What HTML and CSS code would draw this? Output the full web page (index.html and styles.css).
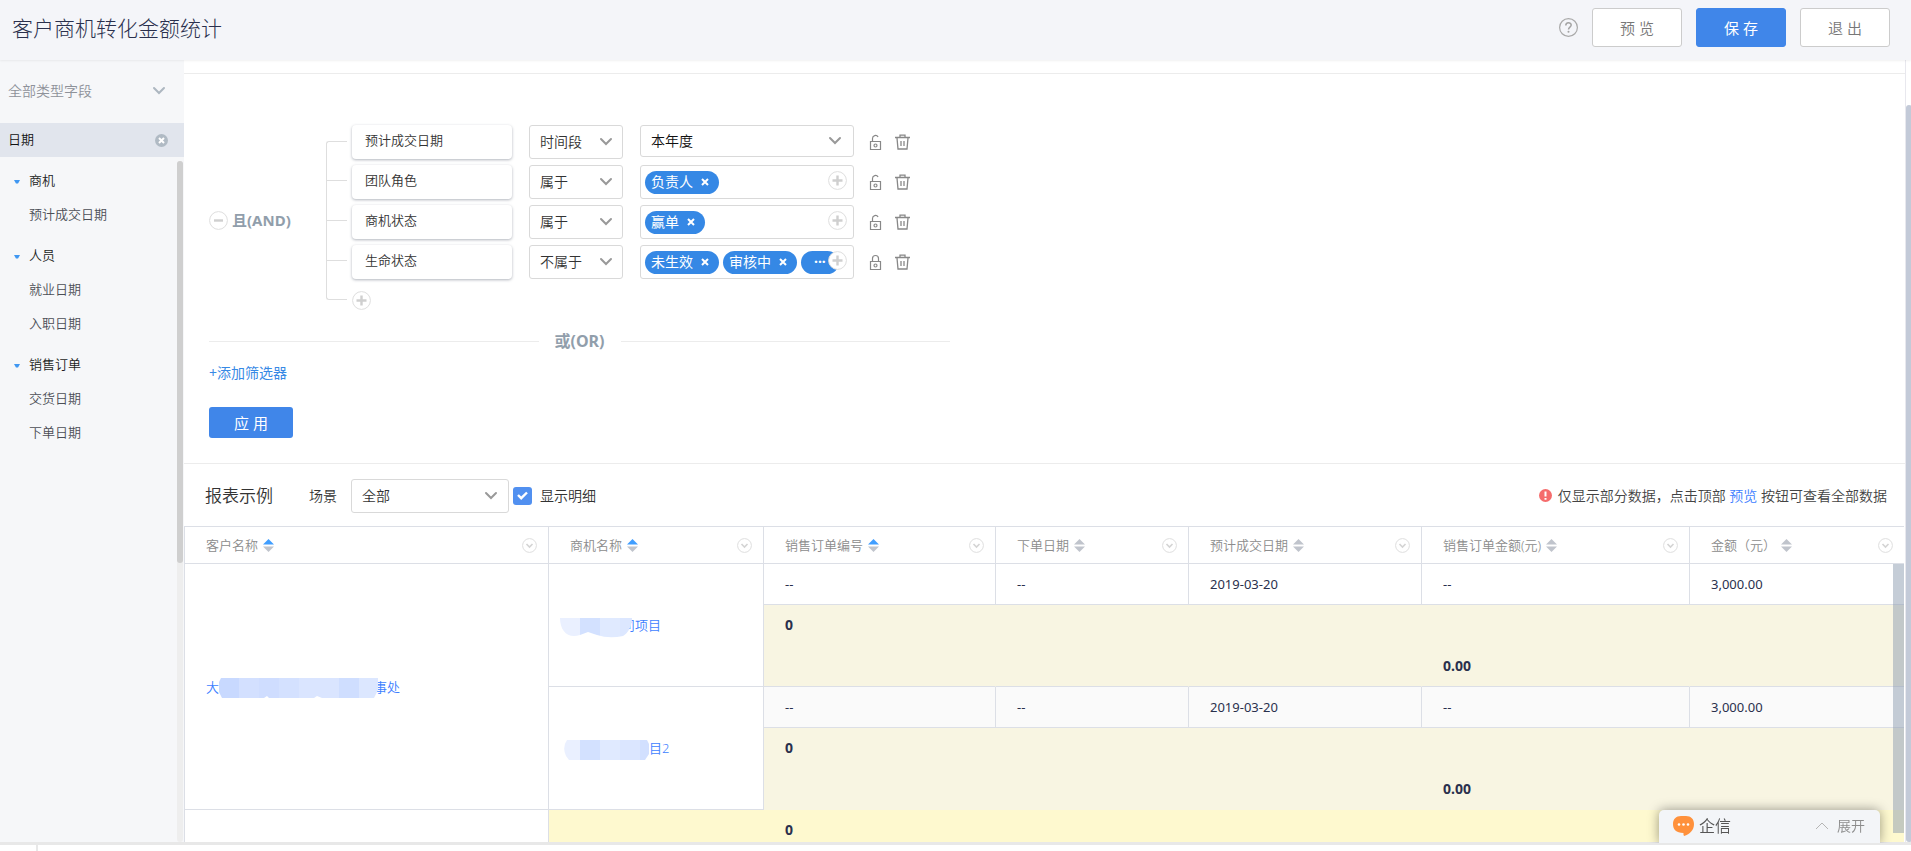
FILE: index.html
```html
<!DOCTYPE html>
<html lang="zh-CN">
<head>
<meta charset="utf-8">
<title>客户商机转化金额统计</title>
<link rel="stylesheet" href="styles.css">
</head>
<body>
<svg class="defs" aria-hidden="true">
  <symbol id="chevron" viewBox="0 0 14 10"><path d="M2 2l5 5 5-5" fill="none" stroke="currentColor" stroke-width="2" stroke-linecap="round"/></symbol>
  <symbol id="plus" viewBox="0 0 19 19"><circle cx="9.5" cy="9.5" r="8.9" fill="#fff" stroke="#dedede"/><path d="M9.5 4.5v10M4.5 9.5h10" stroke="#cfcfcf" stroke-width="2.4"/></symbol>
  <symbol id="unlock" viewBox="0 0 13 16"><path d="M1.5 7.5h10v8h-10zM3.5 7.500V4.500a3 3 0 0 1 5.600-1.500" fill="none" stroke="currentColor" stroke-width="1.200"/><circle cx="6.500" cy="11.500" r="1.500" fill="none" stroke="currentColor" stroke-width="1.200"/></symbol>
  <symbol id="lock" viewBox="0 0 13 16"><path d="M1.5 7.5h10v8h-10zM3.500 7.500V4.500a3 3 0 0 1 6 0v3" fill="none" stroke="currentColor" stroke-width="1.200"/><circle cx="6.500" cy="11.500" r="1.500" fill="none" stroke="currentColor" stroke-width="1.200"/></symbol>
  <symbol id="trash" viewBox="0 0 15 16"><path d="M0 3.500h15M5 3V1.200h5V3M2 4l1 11h9l1-11M6 7v5M9 7v5" fill="none" stroke="currentColor" stroke-width="1.300"/></symbol>
  <symbol id="sort" viewBox="0 0 11 13"><path d="M0 5.500L5.500 0 11 5.500z" class="sort-up"/><path d="M0 7.500L5.500 13 11 7.500z" fill="#c0c4cc"/></symbol>
  <symbol id="menu" viewBox="0 0 15 15"><circle cx="7.500" cy="7.500" r="6.900" fill="#fff" stroke="#dedede"/><path d="M4.500 6l3 3 3-3" fill="none" stroke="#d4d4d4" stroke-width="1.600"/></symbol>
  <symbol id="cross" viewBox="0 0 8 8"><path d="M1 1l6 6M7 1L1 7" stroke="currentColor" stroke-width="2"/></symbol>
  <symbol id="caret" viewBox="0 0 6 4"><path d="M0 0h6L4 3.500H2z" fill="#3f97f2"/></symbol>
</svg>

<header class="header">
  <h1 class="title">客户商机转化金额统计</h1>
  <svg class="help" viewBox="0 0 19 19"><circle cx="9.500" cy="9.500" r="8.900" fill="none" stroke="#a9a9a9" stroke-width="1.200"/><path d="M6.800 7.500c0-3.600 5.400-3.400 5.400-.4 0 2-2.700 2-2.700 4.300" fill="none" stroke="#a3a3a3" stroke-width="1.500"/><circle cx="9.500" cy="13.700" r="1" fill="#a3a3a3"/></svg>
  <button class="btn">预 览</button>
  <button class="btn btn-primary">保 存</button>
  <button class="btn">退 出</button>
</header>

<div class="body">
  <aside class="sidebar">
    <div class="type-select">
      <select aria-label="字段类型"><option>全部类型字段</option></select>
      <svg class="chevron"><use href="#chevron"/></svg>
    </div>
    <div class="search">
      <input type="text" value="日期" aria-label="搜索字段">
      <button class="clear" aria-label="清空"><svg viewBox="0 0 13 13"><circle cx="6.500" cy="6.500" r="6.500" fill="#b0bac4"/><path d="M4 4l5 5M9 4L4 9" stroke="#fff" stroke-width="2"/></svg></button>
    </div>
    <nav class="fields">
      <ul class="tree">
        <li class="group"><svg><use href="#caret"/></svg>商机</li><li>预计成交日期</li>
        <li class="group"><svg><use href="#caret"/></svg>人员</li><li>就业日期</li><li>入职日期</li>
        <li class="group"><svg><use href="#caret"/></svg>销售订单</li><li>交货日期</li><li>下单日期</li>
      </ul>
      <div class="side-track"><div class="side-thumb"></div></div>
    </nav>
  </aside>

  <main class="main">
    <div class="content">
      <section class="filters">
        <div class="rule-group">
          <div class="join"><svg viewBox="0 0 19 19"><circle cx="9.500" cy="9.500" r="8.900" fill="#fff" stroke="#dedede"/><path d="M5 9.500h9" stroke="#cfcfcf" stroke-width="2.400"/></svg>且(AND)</div>
          <div class="bracket"><i></i><i></i><i></i></div>
          <div class="rules">
            <div class="rule">
              <div class="field">预计成交日期</div>
              <div class="pick op"><select aria-label="条件"><option>时间段</option></select><svg class="chevron"><use href="#chevron"/></svg></div>
              <div class="pick value range"><select aria-label="取值"><option>本年度</option></select><svg class="chevron"><use href="#chevron"/></svg></div>
              <button class="icon" aria-label="解锁"><svg class="lock"><use href="#unlock"/></svg></button>
              <button class="icon" aria-label="删除"><svg class="trash"><use href="#trash"/></svg></button>
            </div>
            <div class="rule">
              <div class="field">团队角色</div>
              <div class="pick op"><select aria-label="条件"><option>属于</option></select><svg class="chevron"><use href="#chevron"/></svg></div>
              <div class="value chips"><span class="chip">负责人<button aria-label="移除"><svg><use href="#cross"/></svg></button></span><button class="add" aria-label="添加"><svg><use href="#plus"/></svg></button></div>
              <button class="icon" aria-label="解锁"><svg class="lock"><use href="#unlock"/></svg></button>
              <button class="icon" aria-label="删除"><svg class="trash"><use href="#trash"/></svg></button>
            </div>
            <div class="rule">
              <div class="field">商机状态</div>
              <div class="pick op"><select aria-label="条件"><option>属于</option></select><svg class="chevron"><use href="#chevron"/></svg></div>
              <div class="value chips"><span class="chip">赢单<button aria-label="移除"><svg><use href="#cross"/></svg></button></span><button class="add" aria-label="添加"><svg><use href="#plus"/></svg></button></div>
              <button class="icon" aria-label="解锁"><svg class="lock"><use href="#unlock"/></svg></button>
              <button class="icon" aria-label="删除"><svg class="trash"><use href="#trash"/></svg></button>
            </div>
            <div class="rule">
              <div class="field">生命状态</div>
              <div class="pick op"><select aria-label="条件"><option>不属于</option></select><svg class="chevron"><use href="#chevron"/></svg></div>
              <div class="value chips"><span class="chip">未生效<button aria-label="移除"><svg><use href="#cross"/></svg></button></span><span class="chip">审核中<button aria-label="移除"><svg><use href="#cross"/></svg></button></span><span class="chip more">···</span><button class="add" aria-label="添加"><svg><use href="#plus"/></svg></button></div>
              <button class="icon" aria-label="锁定"><svg class="lock"><use href="#lock"/></svg></button>
              <button class="icon" aria-label="删除"><svg class="trash"><use href="#trash"/></svg></button>
            </div>
            <button class="add-rule" aria-label="添加条件"><svg><use href="#plus"/></svg></button>
          </div>
        </div>
        <div class="or">或(OR)</div>
        <a class="add-filter" href="#">+添加筛选器</a>
        <button class="apply">应 用</button>
      </section>

      <section class="toolbar">
        <h2>报表示例</h2>
        <label class="scene" for="scene">场景</label>
        <div class="pick scene-pick"><select id="scene"><option>全部</option></select><svg class="chevron"><use href="#chevron"/></svg></div>
        <label class="detail"><input type="checkbox" checked><svg viewBox="0 0 19 19"><path d="M5 9l3.200 3.200L14 6.500" fill="none" stroke="#fff" stroke-width="2.400"/></svg><span>显示明细</span></label>
        <p class="notice"><svg viewBox="0 0 13 13"><circle cx="6.500" cy="6.500" r="6.500" fill="#f56c6c"/><path d="M6.500 2.500v5M6.500 9v1.800" stroke="#fff" stroke-width="2"/></svg><span>仅显示部分数据，点击顶部 <a href="#">预览</a> 按钮可查看全部数据</span></p>
      </section>

      <div class="report">
        <table class="grid">
          <colgroup><col class="c1"><col class="c2"><col class="c3"><col class="c4"><col class="c5"><col class="c6"><col class="c7"></colgroup>
          <thead>
            <tr>
              <th><div class="head sorted">客户名称<svg class="sort"><use href="#sort"/></svg><svg class="menu"><use href="#menu"/></svg></div></th>
              <th><div class="head sorted">商机名称<svg class="sort"><use href="#sort"/></svg><svg class="menu"><use href="#menu"/></svg></div></th>
              <th><div class="head sorted">销售订单编号<svg class="sort"><use href="#sort"/></svg><svg class="menu"><use href="#menu"/></svg></div></th>
              <th><div class="head">下单日期<svg class="sort"><use href="#sort"/></svg><svg class="menu"><use href="#menu"/></svg></div></th>
              <th><div class="head">预计成交日期<svg class="sort"><use href="#sort"/></svg><svg class="menu"><use href="#menu"/></svg></div></th>
              <th><div class="head">销售订单金额(元)<svg class="sort"><use href="#sort"/></svg><svg class="menu"><use href="#menu"/></svg></div></th>
              <th><div class="head">金额（元）<svg class="sort"><use href="#sort"/></svg><svg class="menu"><use href="#menu"/></svg></div></th>
            </tr>
          </thead>
          <tbody>
            <tr>
              <td rowspan="6"><a class="masked" href="#">大<svg class="mask mask-a" viewBox="0 0 160 20"><clipPath id="ma"><path d="M2 0h157v12l-4 8H103l-5-2-3 2H50l-2-2-3 2H3L0 14V4z"/></clipPath><g clip-path="url(#ma)"><path fill="#c8d9ff" d="M0 0h20v20H0z"/><path fill="#d3e0ff" d="M20 0h20v20H20z"/><path fill="#cfddff" d="M40 0h20v20H40z"/><path fill="#d4e1ff" d="M60 0h20v20H60z"/><path fill="#dae5ff" d="M80 0h40v20H80z"/><path fill="#cfdeff" d="M120 0h20v20h-20z"/><path fill="#dce7ff" d="M140 0h20v20h-20z"/></g></svg>事处</a></td>
              <td rowspan="3"><a class="masked" href="#"><svg class="mask mask-b" viewBox="0 0 72 20"><clipPath id="mb"><path d="M0 0h72c0 9-4 15-9 18q-14 3-26-1l-9-3-8 3C8 21 0 13 0 0z"/></clipPath><g clip-path="url(#mb)"><path fill="#eaf0ff" d="M0 0h20v20H0z"/><path fill="#d3e1ff" d="M20 0h20v20H20z"/><path fill="#e0eaff" d="M40 0h20v20H40z"/><path fill="#dce7ff" d="M60 0h12v20H60z"/></g></svg>司项目</a></td>
              <td>--</td><td>--</td><td>2019-03-20</td><td>--</td><td>3,000.00</td>
            </tr>
            <tr class="sub"><td>0</td><td></td><td></td><td></td><td></td></tr>
            <tr class="sub sub-end"><td></td><td></td><td></td><td>0.00</td><td></td></tr>
            <tr class="alt">
              <td rowspan="3"><a class="masked" href="#"><svg class="mask mask-c" viewBox="0 0 85 20"><clipPath id="mc"><path d="M3 0h80l2 4v10l-4 6H5l-3-4q-4-9 1-16z"/></clipPath><g clip-path="url(#mc)"><path fill="#eaf0ff" d="M0 0h16v20H0z"/><path fill="#d3e1ff" d="M16 0h20v20H16z"/><path fill="#e0eaff" d="M36 0h20v20H36z"/><path fill="#dbe6ff" d="M56 0h20v20H56z"/><path fill="#d2e0ff" d="M76 0h9v20h-9z"/></g></svg>目2</a></td>
              <td>--</td><td>--</td><td>2019-03-20</td><td>--</td><td>3,000.00</td>
            </tr>
            <tr class="sub"><td>0</td><td></td><td></td><td></td><td></td></tr>
            <tr class="sub"><td></td><td></td><td></td><td>0.00</td><td></td></tr>
            <tr class="total"><td></td><td></td><td>0</td><td></td><td></td><td></td><td></td></tr>
          </tbody>
        </table>
        <div class="grid-scroll"></div>
      </div>
    </div>
    <div class="page-track"><div class="page-thumb"></div></div>
  </main>
</div>

<footer class="taskbar"><i class="tick"></i></footer>

<button class="chat">
  <svg class="bubble" viewBox="0 0 21 21"><path d="M8 1h5c5 0 8 3 8 8 0 6-4 10-10 12-.600-1.300-.600-2-.500-3C3 18 0 14.500 0 9c0-5 3-8 8-8z" fill="#ff913c"/><circle cx="6" cy="9.500" r="1.300" fill="#fff"/><circle cx="10.500" cy="9.500" r="1.300" fill="#fff"/><circle cx="15" cy="9.500" r="1.300" fill="#fff"/></svg>
  <span class="chat-name">企信</span>
  <svg class="up" viewBox="0 0 14 8"><path d="M1 7l6-6 6 6" fill="none" stroke="#b5b5b5"/></svg>
  <span>展开</span>
</button>
</body>
</html>
```

FILE: styles.css
```css
* { box-sizing: border-box; }
body {
  margin: 0;
  height: 100vh;
  display: flex;
  flex-direction: column;
  overflow: hidden;
  background: #fff;
  color: #333;
  font: 350 14px/20px "Noto Sans", "Noto Sans CJK SC", sans-serif;
}
button, select, input { font: inherit; color: inherit; }
button { padding: 0; border: 0; background: none; cursor: pointer; }
svg { display: block; flex: none; }
a { text-decoration: none; }
h1, h2, p, ul { margin: 0; padding: 0; font-weight: 350; }
.defs { position: absolute; width: 0; height: 0; }

.header {
  display: flex;
  align-items: center;
  gap: 14px;
  height: 60px;
  flex: none;
  padding: 0 21px 5px 12px;
  background: #f4f5f9;
  box-shadow: 0 1px 2px rgba(0, 0, 0, .06);
  z-index: 1;
}
.title { flex: 1; font-size: 21px; line-height: 30px; color: #2a304d; font-weight: 300; }
.help { width: 19px; height: 19px; }
.btn {
  width: 90px;
  height: 39px;
  border: 1px solid #ccc;
  border-radius: 3px;
  background: #fff;
  color: #777;
  font-size: 15px;
}
.btn-primary { border-color: #4086e9; background: #4086e9; color: #fff; font-weight: 400; }

.body { flex: 1; min-height: 0; display: flex; }

.sidebar { width: 184px; flex: none; display: flex; flex-direction: column; background: #f6f7f9; }
.type-select { position: relative; margin: 15px 0 17px; color: #8e929a; }
.type-select select {
  width: 100%;
  height: 31px;
  padding: 0 8px;
  border: 0;
  background: none;
  appearance: none;
}
.chevron { position: absolute; right: 10px; top: 12px; width: 14px; height: 10px; color: #999; pointer-events: none; }
.type-select .chevron { right: 18px; top: 11px; color: #adb7c0; }
.search { display: flex; align-items: center; height: 34px; padding: 0 16px 0 8px; background: #e1e5ed; }
.search input { flex: 1; min-width: 0; height: 30px; margin-bottom: 4px; padding: 0; border: 0; background: none; font-size: 13px; color: #111; }
.clear svg { width: 13px; height: 13px; }
.fields { flex: 1; min-height: 0; display: flex; }
.tree { flex: 1; margin-top: -1px; list-style: none; font-size: 13px; line-height: 34px; color: #4b4e56; }
.tree li { padding-left: 29px; }
.tree .group { display: flex; align-items: center; gap: 9px; margin-top: 7px; padding-left: 14px; color: #1c1e22; }
.tree .group svg { width: 6px; height: 4px; margin-top: 3px; }
.side-track { width: 6px; margin: 4px 1px 0 0; border-radius: 3px; background: #eee; }
.side-thumb { height: 59%; border-radius: 3px; background: #cfcfcf; }

.main { flex: 1; min-width: 0; display: flex; }
.content { flex: 1; min-width: 0; display: flex; flex-direction: column; overflow: hidden; }
.page-track { width: 6px; padding-top: 45px; border-left: 1px solid #e8e8ee; }
.page-thumb { width: 6px; height: 100%; border-radius: 3px; background: #c3cad8; }

.filters {
  margin-top: 13px;
  padding: 51px 25px 25px;
  border: 1px solid #ececec;
  border-width: 1px 0;
  display: flex;
  flex-direction: column;
  align-items: flex-start;
}
.rule-group { display: flex; align-items: center; }
.join { display: flex; align-items: center; gap: 4px; width: 117px; font-size: 15px; font-weight: 700; color: #919eab; }
.join svg, .add-rule svg, .add svg { width: 19px; height: 19px; }
.bracket { width: 21px; height: 159px; margin-right: 5px; border: 1px solid #dedede; border-right: 0; border-radius: 3px 0 0 3px; }
.bracket i { display: block; height: 39px; border-bottom: 1px solid #dedede; }
.bracket i + i { height: 40px; }
.rules { display: grid; grid-template-rows: repeat(4, 40px) 30px; }
.rule { display: flex; align-items: flex-start; }
.field {
  width: 160px;
  height: 34px;
  margin-right: 17px;
  padding-left: 13px;
  border-radius: 4px;
  font-size: 13px;
  line-height: 30px;
  box-shadow: 0 1px 3px rgba(60, 70, 90, .4);
}
.pick { position: relative; }
.pick select {
  width: 100%;
  height: 34px;
  padding: 0 10px;
  border: 1px solid #d9d9d9;
  border-radius: 3px;
  background: #fff;
  appearance: none;
}
.op { width: 94px; margin-right: 17px; }
.value { width: 214px; margin-right: 15px; }
.range select { height: 32px; color: #111; }
.range .chevron { right: 12px; top: 11px; }
.chips {
  position: relative;
  display: flex;
  align-items: center;
  gap: 4px;
  height: 34px;
  padding: 0 4px;
  border: 1px solid #d9d9d9;
  border-radius: 3px;
}
.chip {
  display: flex;
  align-items: center;
  gap: 8px;
  height: 23px;
  padding: 0 10px 0 6px;
  border-radius: 12px;
  background: #3588e5;
  color: #fff;
  font-weight: 400;
}
.chip svg { width: 8px; height: 8px; }
.more { width: 38px; padding: 0 13px; font-weight: 700; }
.add { position: absolute; right: 6px; top: 5px; }
.icon { display: flex; align-items: center; height: 34px; margin-right: 13px; color: #888; }
.lock { width: 13px; height: 16px; }
.trash { width: 15px; height: 16px; }
.add-rule { justify-self: start; height: 30px; }

.or { display: flex; align-items: center; gap: 16px; width: 741px; max-width: 100%; margin-top: 16px; font-size: 16px; font-weight: 700; color: #919eab; }
.or::before, .or::after { content: ""; flex: 1; border-top: 1px solid #ececec; }
.add-filter { margin-top: 12px; color: #3789e5; font-weight: 400; }
.apply { width: 84px; height: 31px; margin-top: 24px; border-radius: 3px; background: #4086e9; color: #fff; font-size: 15px; font-weight: 400; }

.toolbar { display: flex; align-items: center; height: 62px; flex: none; padding: 1px 18px 0 21px; }
.toolbar h2 { margin-right: 36px; font-size: 17px; }
.scene { margin-right: 14px; }
.scene-pick { width: 158px; margin-right: 4px; }
.scene-pick .chevron { right: 11px; }
.detail { position: relative; display: flex; align-items: center; gap: 8px; }
.detail input { appearance: none; width: 19px; height: 18px; margin: 0; border-radius: 3px; background: #5190f0; }
.detail svg { position: absolute; left: 0; width: 19px; height: 19px; }
.notice { display: flex; align-items: center; gap: 6px; margin-left: auto; color: #444; }
.notice svg { width: 13px; height: 13px; }
.notice a { color: #3d7eff; }

.report { position: relative; flex: 1; min-height: 0; margin-right: 1px; overflow: hidden; }
.grid { width: 100%; table-layout: fixed; border-collapse: separate; border-spacing: 0; border-top: 1px solid #dcdfe6; border-left: 1px solid #dcdfe6; font-size: 13px; color: #2a304d; }
.c1 { width: 364px; }
.c2 { width: 215px; }
.c3 { width: 232px; }
.c4 { width: 193px; }
.c5 { width: 233px; }
.c6 { width: 268px; }
.c7 { width: 215px; }
.grid th, .grid td { height: 41px; padding: 0 20px 0 21px; border: 1px solid #dcdfe6; border-width: 0 1px 1px 0; text-align: left; background: #fff; }
.grid th { height: 37px; padding-right: 11px; font-weight: 350; color: #8c8c8c; }
.grid td { font-weight: 400; }
.head { display: flex; align-items: center; --up: #c0c4cc; }
.sorted { --up: #409eff; }
.sort-up { fill: var(--up); }
.sort { width: 11px; height: 13px; margin-left: 5px; }
.menu { width: 15px; height: 15px; margin-left: auto; }
.grid .alt td { background: #fafafa; }
.grid .alt td[rowspan] { background: #fff; }
.grid .sub td { border-color: transparent; background: #f8f5e2; font-size: 14px; font-weight: 700; }
.grid .sub-end td { border-bottom-color: #dcdfe6; }
.grid .total td { border-color: transparent; background: #fef9cf; font-size: 14px; font-weight: 700; }
.grid .total td:first-child { border-right-color: #dcdfe6; background: #fff; }
.masked { display: flex; align-items: center; color: #3d7eff; font-weight: 350; }
.mask { height: 20px; z-index: 1; }
.mask-a { width: 160px; margin: 3px -5px 0 0; }
.mask-b { width: 72px; margin: 5px -10px 0 -10px; }
.mask-c { width: 85px; margin: 3px 0 0 -6px; }
.grid-scroll { position: absolute; top: 38px; right: 0; bottom: 9px; width: 11px; background: rgba(139, 155, 175, .5); }

.taskbar { height: 9px; flex: none; padding-left: 36px; border-top: 3px solid #e8e8e8; }
.tick { display: block; width: 2px; height: 6px; background: #e8e8e8; }

.chat {
  position: fixed;
  right: 31px;
  bottom: 8px;
  z-index: 2;
  display: flex;
  align-items: center;
  gap: 8px;
  width: 221px;
  height: 33px;
  padding: 0 15px 2px 14px;
  border-radius: 5px 5px 0 0;
  background: #f3f5f8;
  color: #8c8c8c;
  box-shadow: 0 0 12px rgba(0, 0, 0, .4);
  clip-path: inset(-16px -16px 0 -16px);
}
.bubble { width: 21px; height: 21px; }
.chat-name { margin-right: auto; margin-left: -3px; font-size: 16px; color: #555; }
.up { width: 14px; height: 8px; }
```
